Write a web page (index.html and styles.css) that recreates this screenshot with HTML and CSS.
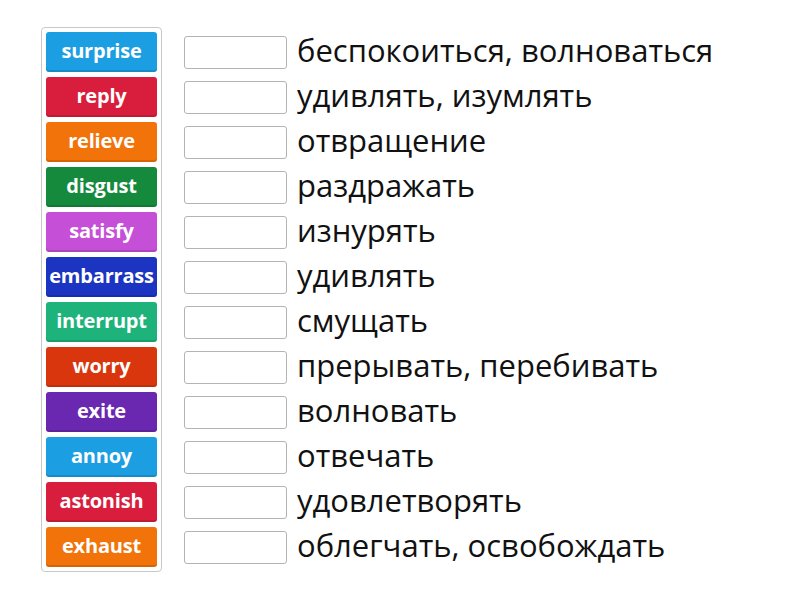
FILE: index.html
```html
<!DOCTYPE html>
<html>
<head>
<meta charset="utf-8">
<link rel="stylesheet" href="styles.css">
</head>
<body>
<div class="page">
  <div class="bank">
    <div class="tile c-blue">surprise</div>
    <div class="tile c-red">reply</div>
    <div class="tile c-orange">relieve</div>
    <div class="tile c-green">disgust</div>
    <div class="tile c-magenta">satisfy</div>
    <div class="tile c-navy">embarrass</div>
    <div class="tile c-teal">interrupt</div>
    <div class="tile c-vermilion">worry</div>
    <div class="tile c-purple">exite</div>
    <div class="tile c-blue">annoy</div>
    <div class="tile c-red">astonish</div>
    <div class="tile c-orange">exhaust</div>
  </div>
  <div class="rows">
    <div class="row"><div class="slot"></div><div class="def">беспокоиться, волноваться</div></div>
    <div class="row"><div class="slot"></div><div class="def">удивлять, изумлять</div></div>
    <div class="row"><div class="slot"></div><div class="def">отвращение</div></div>
    <div class="row"><div class="slot"></div><div class="def">раздражать</div></div>
    <div class="row"><div class="slot"></div><div class="def">изнурять</div></div>
    <div class="row"><div class="slot"></div><div class="def">удивлять</div></div>
    <div class="row"><div class="slot"></div><div class="def">смущать</div></div>
    <div class="row"><div class="slot"></div><div class="def">прерывать, перебивать</div></div>
    <div class="row"><div class="slot"></div><div class="def">волновать</div></div>
    <div class="row"><div class="slot"></div><div class="def">отвечать</div></div>
    <div class="row"><div class="slot"></div><div class="def">удовлетворять</div></div>
    <div class="row"><div class="slot"></div><div class="def">облегчать, освобождать</div></div>
  </div>
</div>
</body>
</html>
```
FILE: styles.css
```css
html, body {
  margin: 0;
  padding: 0;
  background: #ffffff;
}
.page {
  display: flex;
  align-items: flex-start;
  padding: 27px 0 0 41px;
  font-family: "Open Sans", "DejaVu Sans", sans-serif;
}
.bank {
  width: 111px;
  padding: 4px;
  border: 1px solid #c8c8c8;
  border-radius: 4px;
  display: flex;
  flex-direction: column;
  gap: 5px;
}
.tile {
  height: 40px;
  box-sizing: border-box;
  padding-bottom: 3px;
  border-radius: 3px;
  color: #ffffff;
  font-weight: 700;
  font-size: 20px;
  display: flex;
  align-items: center;
  justify-content: center;
  box-shadow: inset 0 -2px 0 rgba(0,0,0,0.12);
  white-space: nowrap;
  letter-spacing: -0.2px;
}
.c-blue { background: #1c9ee2; }
.c-red { background: #d81e3c; }
.c-orange { background: #f17309; }
.c-green { background: #158a3c; }
.c-magenta { background: #c54fd6; }
.c-navy { background: #1b34c2; }
.c-teal { background: #1eb37a; }
.c-vermilion { background: #d9360e; }
.c-purple { background: #6a27b0; }
.rows {
  margin-left: 22px;
  padding-top: 5px;
  display: flex;
  flex-direction: column;
  gap: 5px;
}
.row {
  height: 40px;
  display: flex;
  align-items: center;
}
.slot {
  width: 101px;
  height: 31px;
  border: 1px solid #b4b4b4;
  border-radius: 3px;
  background: #fff;
  flex: none;
}
.def {
  margin-left: 10px;
  font-size: 31px;
  line-height: 40px;
  padding-bottom: 4px;
  color: #111111;
  white-space: nowrap;
}
```
